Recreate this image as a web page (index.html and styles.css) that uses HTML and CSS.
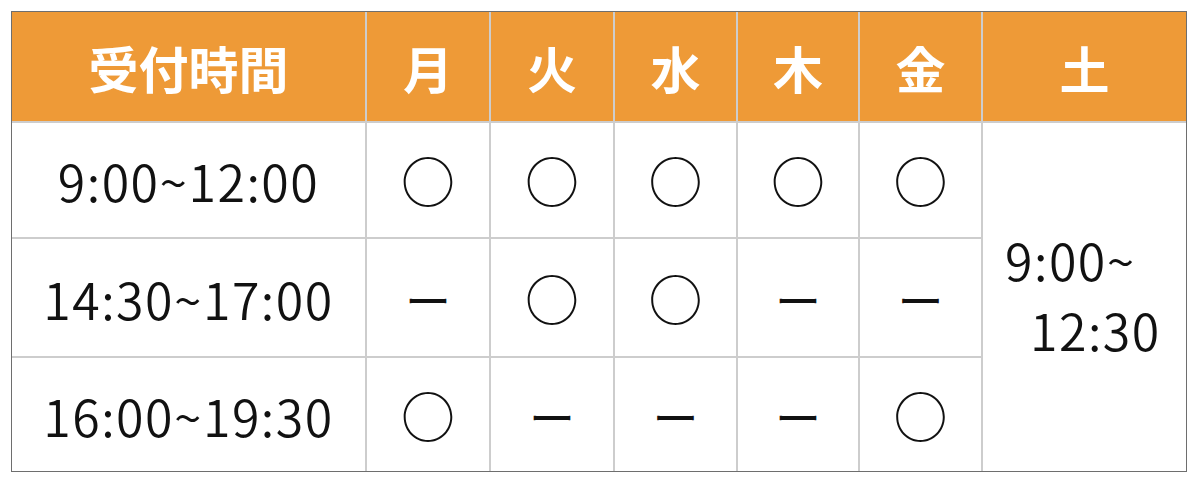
FILE: index.html
```html
<!DOCTYPE html>
<html lang="ja">
<head>
<meta charset="utf-8">
<title>受付時間</title>
<link rel="stylesheet" href="styles.css">
</head>
<body>
<table class="hours">
  <colgroup>
    <col class="c-time">
    <col class="c-day">
    <col class="c-day">
    <col class="c-day3">
    <col class="c-day4">
    <col class="c-day3">
    <col class="c-sat">
  </colgroup>
  <thead>
    <tr class="r-head">
      <th>受付時間</th>
      <th>月</th>
      <th>火</th>
      <th>水</th>
      <th>木</th>
      <th>金</th>
      <th class="last">土</th>
    </tr>
  </thead>
  <tbody>
    <tr class="r1">
      <td class="time">9:00~12:00</td>
      <td class="mark">○</td>
      <td class="mark">○</td>
      <td class="mark">○</td>
      <td class="mark">○</td>
      <td class="mark">○</td>
      <td class="sat last" rowspan="3"><span class="l1">9:00~</span><span class="l2">12:30</span></td>
    </tr>
    <tr class="r2">
      <td class="time">14:30~17:00</td>
      <td class="mark dash">ー</td>
      <td class="mark">○</td>
      <td class="mark">○</td>
      <td class="mark dash">ー</td>
      <td class="mark dash">ー</td>
    </tr>
    <tr class="r3">
      <td class="time">16:00~19:30</td>
      <td class="mark">○</td>
      <td class="mark dash">ー</td>
      <td class="mark dash">ー</td>
      <td class="mark dash">ー</td>
      <td class="mark">○</td>
    </tr>
  </tbody>
</table>
</body>
</html>
```

FILE: styles.css
```css
html, body {
  margin: 0;
  padding: 0;
  background: #ffffff;
}

body {
  padding: 11px 0 0 11px;
  font-family: "Noto Sans CJK JP", "Noto Sans", sans-serif;
  color: #111111;
}

.hours {
  border-collapse: separate;
  border-spacing: 0;
  table-layout: fixed;
  width: 1176px;
  border: 1px solid #6e6e6e;
}

.c-time { width: 355px; }
.c-day { width: 124px; }
.c-day3 { width: 123px; }
.c-day4 { width: 122px; }
.c-sat { width: 203px; }

.hours th,
.hours td {
  padding: 0;
  border-right: 2px solid #cdcdcd;
  border-bottom: 2px solid #cdcdcd;
  text-align: center;
  vertical-align: middle;
}

.hours .last {
  border-right: none;
}

.hours .r3 td,
.hours .sat {
  border-bottom: none;
}

.r-head { height: 111px; }
.r1 { height: 116px; }
.r2 { height: 119px; }
.r3 { height: 113px; }

.r-head th {
  background: #ee9a37;
  color: #ffffff;
  font-weight: 700;
  font-size: 50px;
  line-height: 1;
}

.hours .time {
  font-size: 50px;
  line-height: 1;
  font-weight: 350;
  letter-spacing: 1.5px;
}

.hours .mark {
  font-size: 54px;
  line-height: 1;
  font-weight: 400;
}

.hours .dash {
  font-size: 46px;
}

.hours .sat {
  text-align: left;
  font-size: 50px;
  font-weight: 350;
  letter-spacing: 1.5px;
  line-height: 70px;
  padding: 0 0 6px 22px;
}

.sat .l1,
.sat .l2 {
  display: block;
}

.sat .l2 {
  padding-left: 25px;
}
```
